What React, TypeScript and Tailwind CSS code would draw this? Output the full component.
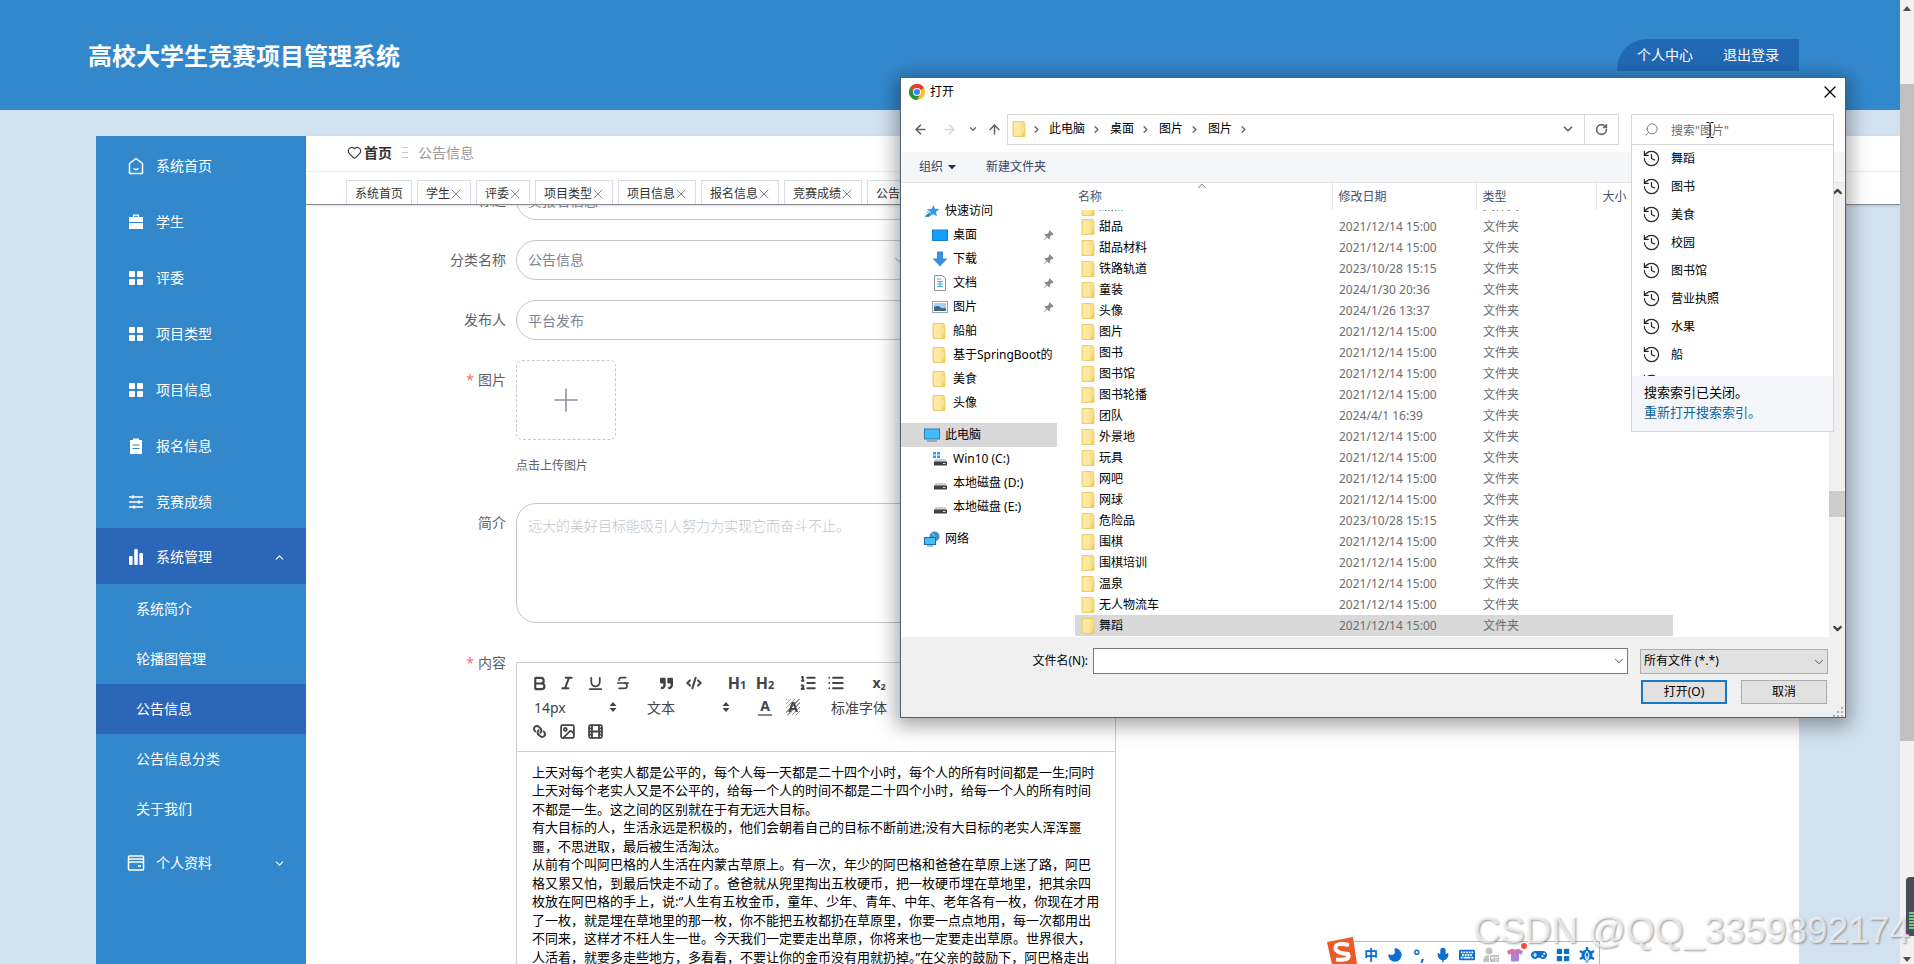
import type { ReactNode } from "react";
import {
  ArrowLeft,
  ArrowRight,
  ArrowUp,
  Bold,
  ChevronDown,
  ChevronRight,
  ChevronUp,
  CodeXml,
  Film,
  Heart,
  History,
  Image,
  Italic,
  List,
  ListOrdered,
  Mic,
  Moon,
  Plus,
  RotateCw,
  Search,
  Strikethrough,
  Underline,
  X,
} from "lucide-react";
import { FaGamepad, FaKeyboard, FaLink, FaQuoteRight, FaTshirt } from "react-icons/fa";
import { BsPinAngleFill } from "react-icons/bs";

type IconName = "home" | "case" | "grid" | "clipboard" | "sliders" | "chart" | "card";

const menuIcons: Record<IconName, ReactNode> = {
  home: (
    <g fill="none" stroke="currentColor" strokeWidth="1.5">
      <path d="M2.500 6.500 9 1.500l6.500 5v10h-13z" strokeLinejoin="round" />
      <path d="M6.500 11.500q2.500 2 5 0" />
    </g>
  ),
  case: (
    <g fill="currentColor">
      <path d="M6 4V1.500h6V4h4v5H2V4zM7.300 4h3.400V2.800H7.300z" fillRule="evenodd" />
      <path d="M2 10h14v6H2z" />
    </g>
  ),
  grid: (
    <g fill="currentColor">
      <rect x="2" y="2" width="6" height="6" rx="1" />
      <rect x="10" y="2" width="6" height="6" rx="1" />
      <rect x="2" y="10" width="6" height="6" rx="1" />
      <rect x="10" y="10" width="6" height="6" rx="1" />
    </g>
  ),
  clipboard: (
    <g>
      <path d="M3 3h3V1.500h6V3h3v14H3z" fill="currentColor" />
      <path d="M5.500 8h7M5.500 11.500h7" stroke="#3388cc" strokeWidth="1.2" />
    </g>
  ),
  sliders: (
    <g stroke="currentColor" strokeWidth="1.6" fill="currentColor">
      <path d="M2 4h14M2 9h14M2 14h14" />
      <path d="M6 2.500v3M12 7.500v3M7 12.500v3" strokeWidth="2.200" />
    </g>
  ),
  chart: (
    <g fill="currentColor">
      <rect x="2" y="8" width="3.600" height="9" rx="1" />
      <rect x="7.200" y="1" width="3.600" height="16" rx="1" />
      <rect x="12.400" y="5" width="3.600" height="12" rx="1" />
    </g>
  ),
  card: (
    <g fill="none" stroke="currentColor" strokeWidth="1.5">
      <rect x="1.500" y="2" width="15" height="14" rx="1" />
      <path d="M1.500 5h15M1.500 8h15M11 12h3" />
    </g>
  ),
};

const MenuIcon = ({ name }: { name: IconName }) => (
  <svg viewBox="0 0 18 18" className="h-[18px] w-[18px]">
    {menuIcons[name]}
  </svg>
);

const menu: { label: string; icon: IconName }[] = [
  { label: "系统首页", icon: "home" },
  { label: "学生", icon: "case" },
  { label: "评委", icon: "grid" },
  { label: "项目类型", icon: "grid" },
  { label: "项目信息", icon: "grid" },
  { label: "报名信息", icon: "clipboard" },
  { label: "竞赛成绩", icon: "sliders" },
];

const subMenu = ["系统简介", "轮播图管理", "公告信息", "公告信息分类", "关于我们"];

const Sidebar = () => (
  <nav className="w-[210px] shrink-0 bg-[#3388cc] text-sm text-white">
    {menu.map((item) => (
      <a key={item.label} href="#" className="flex h-14 items-center gap-[11px] pt-1 pl-[31px]">
        <MenuIcon name={item.icon} />
        {item.label}
      </a>
    ))}
    <button className="flex h-14 w-full items-center gap-[11px] bg-[#2b66b8] pt-[2px] pr-5 pl-[31px]">
      <MenuIcon name="chart" />
      系统管理
      <ChevronUp size={13} className="ml-auto" />
    </button>
    {subMenu.map((label) => (
      <a
        key={label}
        href="#"
        className={`flex h-[50px] items-center pl-10 ${label === "公告信息" ? "bg-[#2b66b8]" : ""}`}
      >
        {label}
      </a>
    ))}
    <button className="flex h-14 w-full items-center gap-[11px] pt-[2px] pr-5 pl-[31px]">
      <MenuIcon name="card" />
      个人资料
      <ChevronDown size={13} className="ml-auto" />
    </button>
  </nav>
);

const tabs = ["系统首页", "学生", "评委", "项目类型", "项目信息", "报名信息", "竞赛成绩", "公告信息"];

const TopBar = () => (
  <div className="relative h-[69px] border-b border-[#8a8a90] bg-white shadow-sm">
    <div className="flex h-9 items-center border-b border-[#eeeeee] pb-[2px] pl-[41px] text-sm">
      <Heart size={15} className="text-[#444]" />
      <a href="#" className="ml-[2px] font-bold text-[#303133]">
        首页
      </a>
      <span className="mx-[10px] flex w-[6px] flex-col gap-1">
        <i className="h-px bg-[#c0c4cc]" />
        <i className="h-px bg-[#c0c4cc]" />
        <i className="h-px bg-[#c0c4cc]" />
      </span>
      <span className="text-[#999]">公告信息</span>
    </div>
    <div className="mt-2 flex h-6 gap-[5px] pl-10 text-xs text-[#333]">
      {tabs.map((tab, i) => (
        <div key={tab} className="flex items-center border border-b-0 border-[#d8dce5] px-2 pt-[2px]">
          <a href="#" className="whitespace-nowrap">
            {tab}
          </a>
          {i > 0 && (
            <button aria-label={`关闭${tab}`} className="-mx-[2px] text-[#888]">
              <X size={16} strokeWidth={1.5} />
            </button>
          )}
        </div>
      ))}
    </div>
  </div>
);

const Row = ({
  label,
  id,
  required,
  children,
}: {
  label: string;
  id: string;
  required?: boolean;
  children: ReactNode;
}) => (
  <div className="flex">
    <label
      id={`${id}-label`}
      htmlFor={id}
      className="w-[200px] shrink-0 pr-[10px] text-right text-sm leading-10 text-[#606266]"
    >
      {required && <span className="mr-1 text-[#f56c6c]">*</span>}
      {label}
    </label>
    {children}
  </div>
);

const inputClass = "h-10 w-[400px] rounded-[20px] border border-[#c4c6ca] bg-white px-[11px] text-sm text-[#7d8494]";

const paragraphs = [
  "上天对每个老实人都是公平的，每个人每一天都是二十四个小时，每个人的所有时间都是一生;同时上天对每个老实人又是不公平的，给每一个人的时间不都是二十四个小时，给每一个人的所有时间不都是一生。这之间的区别就在于有无远大目标。",
  "有大目标的人，生活永远是积极的，他们会朝着自己的目标不断前进;没有大目标的老实人浑浑噩噩，不思进取，最后被生活淘汰。",
  "从前有个叫阿巴格的人生活在内蒙古草原上。有一次，年少的阿巴格和爸爸在草原上迷了路，阿巴格又累又怕，到最后快走不动了。爸爸就从兜里掏出五枚硬币，把一枚硬币埋在草地里，把其余四枚放在阿巴格的手上，说:“人生有五枚金币，童年、少年、青年、中年、老年各有一枚，你现在才用了一枚，就是埋在草地里的那一枚，你不能把五枚都扔在草原里，你要一点点地用，每一次都用出不同来，这样才不枉人生一世。今天我们一定要走出草原，你将来也一定要走出草原。世界很大，人活着，就要多走些地方，多看看，不要让你的金币没有用就扔掉。”在父亲的鼓励下，阿巴格走出",
];

const Tool = ({ label, children }: { label: string; children: ReactNode }) => (
  <button type="button" aria-label={label} className="flex h-6 w-7 items-center justify-center">
    {children}
  </button>
);

const Picker = ({ value, label }: { value: string; label: string }) => (
  <div className="relative w-[98px]">
    <select aria-label={label} className="h-6 w-full appearance-none pl-[9px] text-sm text-[#444]">
      <option>{value}</option>
    </select>
    <svg viewBox="0 0 8 12" className="pointer-events-none absolute top-[6px] right-[6px] h-3 w-2 fill-[#444]">
      <path d="M0.500 5 4 1l3.500 4zM0.500 7 4 11l3.500-4z" />
    </svg>
  </div>
);

const Editor = () => (
  <div className="mt-[19px] w-[600px] border border-[#ccc] bg-white">
    <div className="border-b border-[#ccc] p-2 text-[#444]">
      <div className="flex h-6 gap-[15px]">
        <div className="flex">
          <Tool label="加粗">
            <Bold size={17} strokeWidth={3} />
          </Tool>
          <Tool label="斜体">
            <Italic size={16} strokeWidth={3} />
          </Tool>
          <Tool label="下划线">
            <Underline size={17} strokeWidth={2.5} />
          </Tool>
          <Tool label="删除线">
            <Strikethrough size={16} strokeWidth={2.5} />
          </Tool>
        </div>
        <div className="flex">
          <Tool label="引用">
            <FaQuoteRight size={13} />
          </Tool>
          <Tool label="代码">
            <CodeXml size={16} strokeWidth={3} />
          </Tool>
        </div>
        <div className="flex">
          <Tool label="标题一">
            <span className="text-base font-bold">
              H<small className="text-[11px]">1</small>
            </span>
          </Tool>
          <Tool label="标题二">
            <span className="text-base font-bold">
              H<small className="text-[11px]">2</small>
            </span>
          </Tool>
        </div>
        <div className="flex">
          <Tool label="有序列表">
            <ListOrdered size={18} strokeWidth={2.5} />
          </Tool>
          <Tool label="无序列表">
            <List size={18} strokeWidth={2.5} />
          </Tool>
        </div>
        <div className="flex">
          <Tool label="下标">
            <span className="text-sm font-bold">
              x<sub className="text-[9px]">2</sub>
            </span>
          </Tool>
          <Tool label="上标">
            <span className="text-sm font-bold">
              x<sup className="text-[9px]">2</sup>
            </span>
          </Tool>
        </div>
      </div>
      <div className="flex h-6 gap-[15px]">
        <Picker label="字号" value="14px" />
        <Picker label="标题" value="文本" />
        <div className="flex">
          <Tool label="文字颜色">
            <span className="border-b-2 border-[#888] px-[2px] text-sm leading-4 font-bold">A</span>
          </Tool>
          <Tool label="背景颜色">
            <span className="bg-[repeating-linear-gradient(135deg,#999_0_1px,#fff_1px_3px)] px-[2px] text-sm leading-4 font-bold">
              A
            </span>
          </Tool>
        </div>
        <Picker label="字体" value="标准字体" />
      </div>
      <div className="flex h-6">
        <Tool label="链接">
          <FaLink size={13} className="-scale-x-100" />
        </Tool>
        <Tool label="图片">
          <Image size={17} strokeWidth={2.5} />
        </Tool>
        <Tool label="视频">
          <Film size={17} strokeWidth={2.5} />
        </Tool>
      </div>
    </div>
    <div
      id="content"
      role="textbox"
      aria-labelledby="content-label"
      contentEditable
      suppressContentEditableWarning
      className="h-[420px] px-[15px] py-[11px] text-[13px] leading-[1.42] text-black"
    >
      {paragraphs.map((p) => (
        <p key={p}>{p}</p>
      ))}
    </div>
  </div>
);

const NoticeForm = () => (
  <form className="mr-[101px] min-h-0 flex-1 overflow-hidden bg-white pl-[10px]">
    <div className="-mt-[25px] flex flex-col gap-5">
      <Row label="标题" id="title" required>
        <input id="title" className={inputClass} defaultValue="奖报名信息" />
      </Row>
      <Row label="分类名称" id="category">
        <div className="relative">
          <select id="category" className={`${inputClass} appearance-none`}>
            <option>公告信息</option>
          </select>
          <ChevronDown size={14} className="pointer-events-none absolute top-[13px] right-[10px] text-[#c0c4cc]" />
        </div>
      </Row>
      <Row label="发布人" id="publisher">
        <input id="publisher" className={inputClass} defaultValue="平台发布" />
      </Row>
      <Row label="图片" id="picture" required>
        <div>
          <button
            id="picture"
            type="button"
            aria-label="上传图片"
            className="flex h-20 w-[100px] items-center justify-center rounded-md border border-dashed border-[#c8c8c8]"
          >
            <Plus size={38} strokeWidth={1} className="text-[#8c939d]" />
          </button>
          <p className="mt-4 text-xs leading-5 text-[#606266]">点击上传图片</p>
        </div>
      </Row>
      <div className="mt-[7px]">
        <Row label="简介" id="intro">
          <textarea
            id="intro"
            placeholder="远大的美好目标能吸引人努力为实现它而奋斗不止。"
            className="h-[120px] w-[600px] resize-none rounded-[20px] border border-[#c4c6ca] px-[11px] py-3 text-sm placeholder:font-light placeholder:text-[#c0c4cc]"
          />
        </Row>
      </div>
      <Row label="内容" id="content" required>
        <Editor />
      </Row>
    </div>
  </form>
);

const Folder = () => (
  <svg viewBox="0 0 14 16" className="h-4 w-[14px] shrink-0">
    <path d="M1 0.500h11l1 3V15.500H1z" fill="#f9df86" stroke="#e8c763" strokeWidth="0.800" />
    <path d="M2 1.500h7v13H2z" fill="#fde9a4" />
    <path d="M13 8v7.500H9.500z" fill="#f2cf52" />
  </svg>
);

const Drive = ({ win }: { win?: boolean }) => (
  <svg viewBox="0 0 16 16" className="h-4 w-4 shrink-0">
    {win && <path d="M1 1h3v2.500H1zM5 1h3v2.500H5zM1 4.500h3V7H1zM5 4.500h3V7H5z" fill="#27a4e4" />}
    <path d="M3.500 8h10l1.500 3H2z" fill="#cfcfcf" />
    <rect x="2" y="10.500" width="13" height="4" rx="0.500" fill="#3f4245" />
    <rect x="11" y="12" width="2.500" height="1" fill="#c5f0d0" />
  </svg>
);

const navIcons = {
  star: (
    <svg viewBox="0 0 16 16" className="h-4 w-4 shrink-0">
      <path d="m9.500 2 1.300 3.800 4.700.200-3.600 3 1.100 4.500-3.700-2.500-3.800 2.500 1.200-4.300L3 6.200l4.600-.2z" fill="#2f9be8" />
      <path d="m1 13.500 5-4-1 4zM2 10l3-1.500" stroke="#2375b5" fill="#2375b5" strokeWidth="0.600" />
    </svg>
  ),
  desktop: (
    <svg viewBox="0 0 16 16" className="h-4 w-4 shrink-0">
      <rect x="0" y="2.500" width="16" height="11.500" fill="#1a7fd0" />
      <rect x="1" y="3.500" width="14" height="9.500" fill="#12a0fb" />
    </svg>
  ),
  download: (
    <svg viewBox="0 0 16 16" className="h-4 w-4 shrink-0">
      <path d="M5 0.500h6v7h4.500l-7.500 8-7.500-8H5z" fill="#3b8de0" />
    </svg>
  ),
  doc: (
    <svg viewBox="0 0 16 16" className="h-4 w-4 shrink-0">
      <path d="M2.500 0.500h8L13.500 3.500v12h-11z" fill="#fff" stroke="#8b959c" />
      <path d="M5 4h4M5 6.500h6M5 9h6M5 11.500h6M8 6v6" stroke="#4aa3d6" />
    </svg>
  ),
  picture: (
    <svg viewBox="0 0 16 16" className="h-4 w-4 shrink-0">
      <rect x="0.500" y="2.500" width="15" height="11" fill="#fff" stroke="#99a5ad" />
      <rect x="2" y="4" width="12" height="8" fill="#a9cfec" />
      <path d="M2 8q4-2 6 0t6 1v3H2z" fill="#3e6685" />
    </svg>
  ),
  pc: (
    <svg viewBox="0 0 16 16" className="h-4 w-4 shrink-0">
      <rect x="0.500" y="2" width="15" height="10" fill="#40bdf8" stroke="#2b7cb0" />
      <path d="M3 14h10" stroke="#6c7c88" />
    </svg>
  ),
  network: (
    <svg viewBox="0 0 16 16" className="h-4 w-4 shrink-0">
      <circle cx="10.500" cy="5.500" r="5" fill="#3d8fc6" />
      <path d="M8 2q4 3 3 8" stroke="#a9d8f2" fill="none" />
      <rect x="0.500" y="6.500" width="11" height="7" fill="#45bdf5" stroke="#1c6fa6" />
      <path d="M3 15h6" stroke="#4b87ad" />
    </svg>
  ),
  folder: <Folder />,
  drive: <Drive />,
  win: <Drive win />,
};

type NavItem = { label: string; icon: keyof typeof navIcons; pinned?: boolean };

const quickAccess: NavItem[] = [
  { label: "桌面", icon: "desktop", pinned: true },
  { label: "下载", icon: "download", pinned: true },
  { label: "文档", icon: "doc", pinned: true },
  { label: "图片", icon: "picture", pinned: true },
  { label: "船舶", icon: "folder" },
  { label: "基于SpringBoot的", icon: "folder" },
  { label: "美食", icon: "folder" },
  { label: "头像", icon: "folder" },
];

const drives: NavItem[] = [
  { label: "Win10 (C:)", icon: "win" },
  { label: "本地磁盘 (D:)", icon: "drive" },
  { label: "本地磁盘 (E:)", icon: "drive" },
];

const NavEntry = ({ item }: { item: NavItem }) => (
  <li className="flex h-6 items-center pl-[31px]">
    <span className="flex w-[21px] shrink-0">{navIcons[item.icon]}</span>
    <span className="whitespace-nowrap">{item.label}</span>
    {item.pinned && <BsPinAngleFill size={11} className="mr-[3px] ml-auto text-[#868b90]" />}
  </li>
);

const NavRoot = ({ label, icon, active }: { label: string; icon: keyof typeof navIcons; active?: boolean }) => (
  <li className={`flex h-6 items-center gap-[5px] pl-[23px] ${active ? "bg-[#d9d9d9]" : ""}`}>
    {navIcons[icon]}
    {label}
  </li>
);

const files = [
  ["甜点", "2021/12/14 15:00"],
  ["甜品", "2021/12/14 15:00"],
  ["甜品材料", "2021/12/14 15:00"],
  ["铁路轨道", "2023/10/28 15:15"],
  ["童装", "2024/1/30 20:36"],
  ["头像", "2024/1/26 13:37"],
  ["图片", "2021/12/14 15:00"],
  ["图书", "2021/12/14 15:00"],
  ["图书馆", "2021/12/14 15:00"],
  ["图书轮播", "2021/12/14 15:00"],
  ["团队", "2024/4/1 16:39"],
  ["外景地", "2021/12/14 15:00"],
  ["玩具", "2021/12/14 15:00"],
  ["网吧", "2021/12/14 15:00"],
  ["网球", "2021/12/14 15:00"],
  ["危险品", "2023/10/28 15:15"],
  ["围棋", "2021/12/14 15:00"],
  ["围棋培训", "2021/12/14 15:00"],
  ["温泉", "2021/12/14 15:00"],
  ["无人物流车", "2021/12/14 15:00"],
  ["舞蹈", "2021/12/14 15:00"],
];

const FileTable = () => (
  <table className="w-[598px] table-fixed border-collapse text-left">
    <thead className="text-[#44546f]">
      <tr className="h-[27px]">
        <th className="relative w-[257px] p-0 pl-[3px] font-normal">
          名称
          <ChevronUp size={14} strokeWidth={1.5} className="absolute -top-1 left-[120px] text-[#555]" />
        </th>
        <th className="w-[144px] border-l border-[#e5e5e5] p-0 pl-[6px] font-normal">修改日期</th>
        <th className="w-[120px] border-l border-[#e5e5e5] p-0 pl-[6px] font-normal">类型</th>
        <th className="border-l border-[#e5e5e5] p-0 pl-[6px] font-normal">大小</th>
      </tr>
    </thead>
    <tbody className="text-[#6d6d6d]">
      {files.map(([name, date], i) => {
        // the first row is scrolled out of the list except for its lower edge
        const cell = i === 0 ? "flex h-[6px] items-end overflow-hidden leading-[21px]" : "flex h-[21px] items-center";
        return (
          <tr key={name} className={name === "舞蹈" ? "bg-[#d9d9d9]" : ""}>
            <td className="p-0 pl-[6px]">
              <div className={`${cell} gap-1 text-black`}>
                <Folder />
                {name}
              </div>
            </td>
            <td className="p-0 pl-[7px]">
              <div className={cell}>{date}</div>
            </td>
            <td className="p-0 pl-[7px]">
              <div className={cell}>文件夹</div>
            </td>
            <td className="p-0" />
          </tr>
        );
      })}
    </tbody>
  </table>
);

const searches = ["舞蹈", "图书", "美食", "校园", "图书馆", "营业执照", "水果", "船", ""];

const SearchBox = () => (
  <div className="relative ml-3 w-[203px] text-black">
    <div className="flex h-[31px] items-center border border-[#d9d9d9] pl-3">
      <Search size={15} strokeWidth={1.5} className="-scale-x-100 text-[#777]" />
      <input aria-label="搜索" placeholder='搜索"图片"' className="ml-3 w-36 pt-1 placeholder:text-[#6d6d6d]" />
    </div>
    <div className="absolute top-[31px] right-0 left-0 z-10 border border-t-0 border-[#d0d7df] bg-white">
      <ul className="h-[231px] overflow-hidden">
        {searches.map((word) => (
          <li key={word} className="flex h-7 items-center gap-[10px] pl-[10px]">
            <History size={19} strokeWidth={1.5} className="text-[#222]" />
            {word}
          </li>
        ))}
      </ul>
      <div className="h-[55px] bg-[#f5f6fa] pt-[6px] pl-3 text-[13px] leading-5">
        <p>搜索索引已关闭。</p>
        <a href="#" className="text-[#0c66a4]">
          重新打开搜索索引。
        </a>
      </div>
    </div>
    <svg viewBox="0 0 8 16" className="absolute top-2 left-[75px] h-4 w-2 fill-none stroke-black">
      <path d="M0.500 0.500h2.500l1 1 1-1h2.500M4 1.500v13M0.500 15.500h2.500l1-1 1 1h2.500" />
    </svg>
  </div>
);

const ChromeLogo = () => (
  <svg viewBox="0 0 16 16" className="h-4 w-4">
    <circle cx="8" cy="8" r="8" fill="#fbc116" />
    <path d="M8 8 1.070 4A8 8 0 0 1 14.930 4z" fill="#e33b2e" />
    <path d="M8 8 1.070 4A8 8 0 0 0 8 16l3-5.500z" fill="#229342" />
    <circle cx="8" cy="8" r="4" fill="#fff" />
    <circle cx="8" cy="8" r="3" fill="#3f7fe8" />
  </svg>
);

const FileDialog = () => (
  <section
    role="dialog"
    aria-label="打开"
    className="absolute top-[77px] left-[900px] flex w-[946px] flex-col border border-[#4c6272] bg-white text-xs text-black shadow-[0_4px_18px_4px_rgba(0,0,0,0.35)]"
  >
    <div className="flex h-7 items-center gap-[5px] pr-[5px] pl-2">
      <ChromeLogo />
      打开
      <button aria-label="关闭" className="ml-auto">
        <X size={20} strokeWidth={1.5} />
      </button>
    </div>
    <div className="flex h-[46px] items-center pl-3 text-[#666]">
      <ArrowLeft size={15} strokeWidth={2.5} />
      <ArrowRight size={15} strokeWidth={2.5} className="ml-[14px] text-[#d8d8d8]" />
      <ChevronDown size={10} strokeWidth={3} className="ml-[11px]" />
      <ArrowUp size={15} strokeWidth={2.5} className="ml-[9px]" />
      <div className="ml-[5px] flex h-[31px] flex-1 items-center border border-[#d9d9d9] pl-1">
        <Folder />
        <ChevronRight size={11} strokeWidth={3} className="mr-[7px] ml-[5px]" />
        {["此电脑", "桌面", "图片", "图片"].map((part, i) => (
          <span key={i} className="flex items-center text-black">
            {part}
            <ChevronRight size={11} strokeWidth={3} className="mr-2 ml-[6px] text-[#666]" />
          </span>
        ))}
        <ChevronDown size={14} strokeWidth={3} className="mr-[9px] ml-auto" />
        <button aria-label="刷新" className="flex h-full w-[34px] items-center justify-center border-l border-[#d9d9d9]">
          <RotateCw size={13} strokeWidth={3} />
        </button>
      </div>
      <SearchBox />
      <span className="w-[11px]" />
    </div>
    <div className="flex h-[31px] items-center border-b border-[#e3e5e8] bg-[#f5f6f7] pl-[18px] text-[#33466b]">
      <button className="flex items-center gap-[5px]">
        组织
        <svg viewBox="0 0 8 5" className="h-[5px] w-2 fill-[#1e3350]">
          <path d="M0 0h8L4 4.500z" />
        </svg>
      </button>
      <button className="ml-[30px]">新建文件夹</button>
    </div>
    <div className="flex h-[454px]">
      <ul className="w-[156px] shrink-0 overflow-hidden pt-4">
        <NavRoot label="快速访问" icon="star" />
        {quickAccess.map((item) => (
          <NavEntry key={item.label} item={item} />
        ))}
        <li className="h-2" />
        <NavRoot label="此电脑" icon="pc" active />
        {drives.map((item) => (
          <NavEntry key={item.label} item={item} />
        ))}
        <li className="h-2" />
        <NavRoot label="网络" icon="network" />
      </ul>
      <div className="min-w-0 flex-1 overflow-hidden pl-[18px]">
        <FileTable />
      </div>
      <div className="flex w-4 flex-col items-center bg-[#f0f0f0] text-[#444]">
        <ChevronUp size={13} strokeWidth={4} className="mt-[2px]" />
        <span className="mt-[293px] h-[26px] w-full bg-[#cdcdcd]" />
        <ChevronDown size={13} strokeWidth={4} className="mt-auto mb-[2px]" />
      </div>
    </div>
    <div className="flex h-20 flex-col bg-[#f0f0f0] pt-[11px]">
      <div className="flex items-center pr-[17px]">
        <label htmlFor="filename" className="w-[192px] pr-[5px] text-right">
          文件名(N):
        </label>
        <div className="relative flex-1">
          <input id="filename" className="h-[26px] w-full border border-[#7a7a7a] bg-white px-1" />
          <ChevronDown size={14} strokeWidth={1.5} className="absolute top-[6px] right-[2px] text-[#444]" />
        </div>
        <div className="relative ml-3 w-[188px]">
          <select
            aria-label="文件类型"
            className="h-[25px] w-full appearance-none border border-[#adadad] bg-[#e1e1e1] pl-[3px]"
          >
            <option>所有文件 (*.*)</option>
          </select>
          <ChevronDown
            size={14}
            strokeWidth={1.5}
            className="pointer-events-none absolute top-[6px] right-[2px] text-[#444]"
          />
        </div>
      </div>
      <div className="mt-[6px] flex justify-end gap-[14px] pr-[18px]">
        <button className="h-6 w-[86px] border-2 border-[#1578c4] bg-[#e1e1e1]">打开(O)</button>
        <button className="h-6 w-[86px] border border-[#adadad] bg-[#e1e1e1]">取消</button>
      </div>
      <svg viewBox="0 0 10 10" className="mt-auto mr-[2px] ml-auto h-[10px] w-[10px] fill-[#b0b0b0]">
        <path d="M8 0h2v2H8zM8 4h2v2H8zM4 4h2v2H4zM8 8h2v2H8zM4 8h2v2H4zM0 8h2v2H0z" />
      </svg>
    </div>
  </section>
);

const InputMethodBar = () => (
  <div className="absolute top-[941px] left-[1350px] flex h-7 w-[250px] items-center gap-2 border border-[#a9bcc9] bg-white pl-3 text-[#0a6fd0]">
    <svg viewBox="0 0 32 32" className="absolute -top-[5px] -left-[25px] h-8 w-8">
      <path d="M1 5 27 0l4 27-24 5z" fill="#ec5a29" />
      <path d="M23 8q-13-3-13.500 2.500T22 17q3 7-12 5.500" fill="none" stroke="#fff" strokeWidth="4" />
    </svg>
    <span className="w-4 text-center text-sm leading-4 font-bold">中</span>
    <Moon size={16} fill="currentColor" className="-scale-x-100" />
    <span className="w-4 text-center text-base leading-4 font-bold">°,</span>
    <Mic size={16} fill="currentColor" />
    <FaKeyboard size={16} />
    <svg viewBox="0 0 16 16" className="h-4 w-4 fill-[#c4c4c4]">
      <circle cx="6" cy="4" r="3.500" />
      <path d="M0 15q0-7 6-7v7z" />
      <path d="M7 8h9v7H7zM8.500 10h2v2h-2zM12 10h2.500v1H12zM12 12.500h2.500v1H12z" fillRule="evenodd" />
    </svg>
    <span className="relative">
      <svg width="0" height="0" className="absolute">
        <linearGradient id="shirt" x1="0" y1="0" x2="1" y2="1">
          <stop offset="0" stopColor="#ee6a8a" />
          <stop offset="1" stopColor="#8f8cff" />
        </linearGradient>
      </svg>
      <FaTshirt size={16} fill="url(#shirt)" />
      <i className="absolute -top-1 -right-1 h-[6px] w-[6px] rounded-full bg-[#f0503c]" />
    </span>
    <FaGamepad size={16} />
    <svg viewBox="0 0 18 18" className="h-4 w-4">
      {menuIcons.grid}
    </svg>
    <svg viewBox="0 0 16 16" className="h-4 w-4">
      <g stroke="currentColor" strokeWidth="2.500">
        <path d="M8 0v16M1 4l14 8M15 4 1 12" />
      </g>
      <circle cx="8" cy="8" r="5.500" fill="currentColor" />
      <path d="m8 4 2 4-1 4.500H7L6 8zM8 9v7" fill="none" stroke="#fff" />
    </svg>
  </div>
);

export default function App() {
  return (
    <div className="relative flex h-screen overflow-hidden bg-[#d1e1ef] font-['Noto_Sans','Noto_Sans_CJK_SC',sans-serif]">
      <div className="flex min-w-0 flex-1 flex-col">
        <header className="flex h-[110px] shrink-0 items-center justify-between bg-[#3388cc] pr-[101px] pl-[88px] text-white">
          <h1 className="pt-[2px] text-2xl font-bold">高校大学生竞赛项目管理系统</h1>
          <div className="flex h-8 items-center gap-[30px] rounded-tl-[30px] bg-[#2269b5] px-5 text-sm">
            <a href="#">个人中心</a>
            <a href="#">退出登录</a>
          </div>
        </header>
        <div className="mt-[26px] flex min-h-0 flex-1 pl-24">
          <Sidebar />
          <main className="flex min-w-0 flex-1 flex-col">
            <TopBar />
            <NoticeForm />
          </main>
        </div>
      </div>
      <div className="flex w-[14px] shrink-0 flex-col items-center bg-[#f1f1f1]">
        <svg viewBox="0 0 8 5" className="mt-[6px] h-[5px] w-2 fill-[#505050]">
          <path d="M0 5h8L4 0z" />
        </svg>
        <span className="mt-[73px] h-[657px] w-full bg-[#c1c1c1]" />
        <svg viewBox="0 0 8 5" className="mt-auto mb-[2px] h-[5px] w-2 fill-[#505050]">
          <path d="M0 0h8L4 5z" />
        </svg>
      </div>
      <FileDialog />
      <InputMethodBar />
      <div className="absolute top-[877px] right-0 flex h-[59px] w-2 flex-col justify-end rounded-l bg-[#484d5b] pb-[6px] pl-[3px]">
        <span className="h-[18px] bg-[repeating-linear-gradient(#6fd08c_0_2px,#484d5b_2px_3px)]" />
      </div>
      <div className="absolute right-[4px] bottom-[12px] font-['Liberation_Sans',sans-serif] text-[37px] leading-[42px] whitespace-nowrap text-white/70 [text-shadow:1px_1px_2px_rgba(90,90,90,0.6)]">
        CSDN @QQ_3359892174
      </div>
    </div>
  );
}
